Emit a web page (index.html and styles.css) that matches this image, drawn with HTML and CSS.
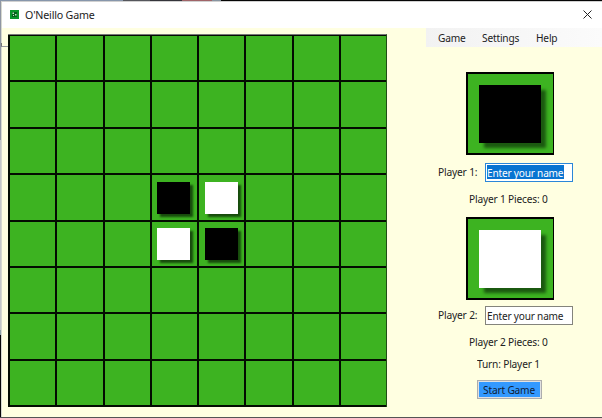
FILE: index.html
```html
<!DOCTYPE html>
<html lang="en">
<head>
<meta charset="utf-8">
<title>O'Neillo Game</title>
<link rel="stylesheet" href="styles.css">
</head>
<body>
<div class="desktop">
<div class="window">
  <header class="titlebar">
    <svg class="app-icon" viewBox="0 0 9 9"><rect width="9" height="9" fill="#08962b"/><rect x="2" y="2" width="5" height="5" fill="#06601d"/><path d="M2.500 2.500h1.500v1.500h-1.500zM5 4h1.500v1.500H5zM3 5h1v1H3z" fill="#b9e8c1"/></svg>
    <span class="title t">O'Neillo Game</span>
    <svg class="close" viewBox="0 0 9 9"><path d="M.5.5l8 8M8.500.5l-8 8" stroke="#222" stroke-width="1" fill="none"/></svg>
  </header>
  <main class="content">
    <div class="board" id="board"></div>
    <aside class="side">
      <nav class="menu"><span class="t m-game">Game</span><span class="t m-settings">Settings</span><span class="t m-help">Help</span></nav>
      <div class="tile"><div class="big black"></div></div>
      <div class="row"><label class="label" for="p1"><span class="t">Player 1:</span></label><div class="field active" id="p1"><div class="selected"><span class="t">Enter your name</span></div></div></div>
      <div class="line count"><span class="t">Player 1 Pieces: 0</span></div>
      <div class="tile"><div class="big white"></div></div>
      <div class="row second"><label class="label" for="p2"><span class="t">Player 2:</span></label><div class="field" id="p2"><div class="value"><span class="t">Enter your name</span></div></div></div>
      <div class="line count"><span class="t">Player 2 Pieces: 0</span></div>
      <div class="line turn"><span class="t">Turn: Player 1</span></div>
      <button class="start"><span class="t">Start Game</span></button>
    </aside>
  </main>
</div>
<div class="edge-mark"></div>
</div>
<script src="board.js"></script>
</body>
</html>
```
FILE: styles.css
```css
* { box-sizing: border-box; }
body {
  margin: 0;
  width: 602px;
  height: 418px;
  overflow: hidden;
  font: 11px/16px "Noto Sans", sans-serif;
  letter-spacing: -0.2px;
  color: #222;
}
.t {
  display: inline-block;
  white-space: nowrap;
  transform: scaleX(0.925);
  transform-origin: 0 50%;
}
.desktop {
  position: relative;
  width: 602px;
  height: 418px;
  padding: 1px 0 1px 1px;
  background:
    linear-gradient(90deg, #8796ab 0 123px, #55565c 123px 150px, #34343a 150px 182px, #a06468 182px 212px, #8794a0 212px 221px, #050505 221px) 0 0 / 602px 1px no-repeat,
    linear-gradient(#8f96a3 0 140px, #c4c7c8 140px 330px, #8fa3a8 330px 335px, #080808 335px) 0 0 / 1px 417px no-repeat,
    #555;
}
.window {
  display: flex;
  flex-direction: column;
  height: 416px;
  background: #ffffe1;
  border-left: 1px solid #d6d8cf;
  border-top: 1px solid #d0d0d0;
}
.edge-mark {
  position: absolute;
  left: 1px;
  top: 43px;
  width: 7px;
  height: 4px;
  border-bottom: 1px solid #999ba0;
  border-left: 1px solid #777;
}
.titlebar {
  display: flex;
  align-items: center;
  height: 26px;
  padding: 0 10px 1px 8px;
  background: #fff;
}
.app-icon { width: 9px; height: 9px; }
.title { margin-left: 6px; transform: scaleX(0.97); }
.close { width: 9px; height: 9px; margin-left: auto; }
.content { display: flex; }
.board {
  display: grid;
  grid-template-columns: repeat(8, 45.3px);
  grid-template-rows: repeat(8, 44.4px);
  gap: 2px;
  width: 379px;
  height: 373px;
  margin: 6px 0 0 6px;
  padding: 1px 0 0 2px;
  background: #030c01;
  border: solid #777;
  border-width: 1px 1px 0 0;
  border-right-color: #1f4d16;
  flex: none;
}
.cell { background: #3db321; display: flex; padding: 6.500px 0 0 5.500px; }
.piece { width: 33px; height: 32px; box-shadow: 3px 3px 2px #174b0c; }
.black { background: #000; }
.white { background: #fff; }
.side { display: flex; flex-direction: column; width: 176px; margin-left: 39px; }
.menu {
  display: flex;
  height: 19px;
  padding: 2px 0 0 12px;
  background: linear-gradient(90deg, #f2f2f2, #fbfbfb);
  margin-bottom: 25px;
}
.m-game { width: 44px; }
.m-settings { width: 54px; }
.tile {
  width: 88px;
  height: 83px;
  margin-left: 40px;
  padding: 11px 0 0 11px;
  background: #3db321;
  border: solid #000;
  border-width: 2px 1px 2px 2px;
  flex: none;
}
.big { width: 62px; height: 58px; box-shadow: 5px 5px 3px #1b5910; }
.row { display: flex; align-items: center; height: 19px; margin-top: 8px; padding-left: 12px; }
.row.second { margin-top: 6px; }
.label { width: 47px; margin-top: -1px; }
.label .t { transform: scaleX(0.93); }
.field {
  width: 88px;
  height: 19px;
  padding: 1px;
  background: #fff;
  border: 1px solid #84847c;
}
.active { border-color: #2b87d8; }
.selected, .value { width: 77px; height: 14px; line-height: 15px; }
.selected .t, .value .t { margin-left: -0.5px; transform: scaleX(0.915); }
.selected { background: #0874d1; color: #fff; }
.line { margin-left: 43px; height: 16px; }
.count { margin-top: 9px; }
.row + .count { margin-bottom: 10px; }
.row + .count + .turn { margin-top: -4px; margin-left: 51px; }
.start {
  width: 65px;
  height: 19px;
  margin: 8px 0 0 51px;
  padding: 0 0 0 5px;
  text-align: left;
  font: inherit;
  letter-spacing: inherit;
  color: #101c33;
  background: #3399ff;
  border: 1px solid #adadad;
  box-shadow: inset 0 0 0 1px #e1e1e1;
  line-height: 15px;
}
```
FILE: board.js
```js
const board = document.getElementById("board");
const pieces = { 27: "black", 28: "white", 35: "white", 36: "black" };
for (let i = 0; i < 64; i++) {
  const cell = document.createElement("div");
  cell.className = "cell";
  if (pieces[i]) {
    const piece = document.createElement("div");
    piece.className = "piece " + pieces[i];
    cell.appendChild(piece);
  }
  board.appendChild(cell);
}
```
